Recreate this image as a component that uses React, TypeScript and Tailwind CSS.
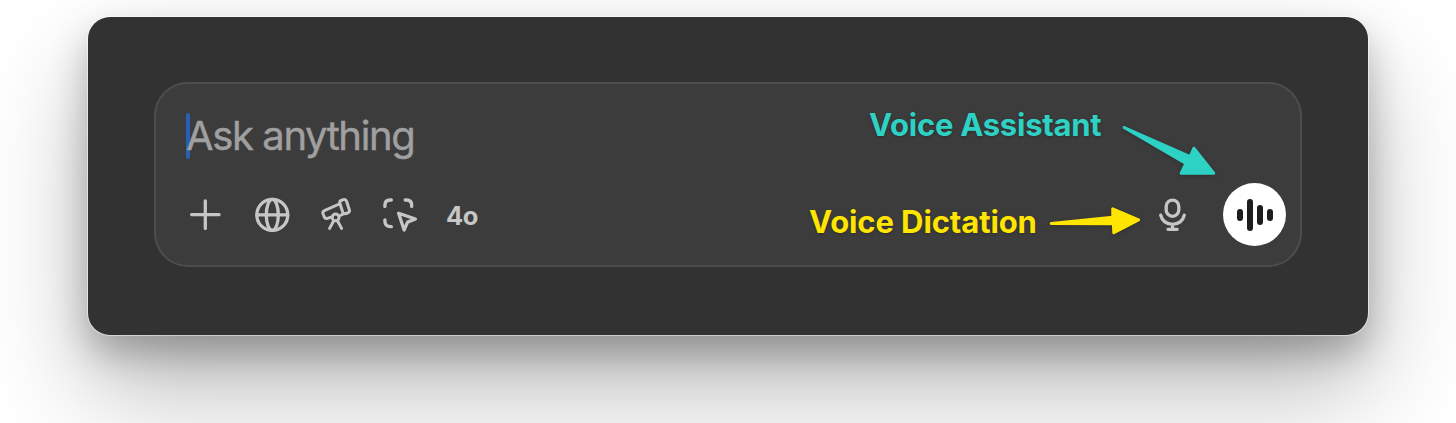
import type { ReactNode } from "react";

type IconProps = { viewBox: string; className: string; children: ReactNode };

function Glyph({ viewBox, className, children }: IconProps) {
  return (
    <svg viewBox={viewBox} className={`block shrink-0 ${className}`} fill="none" stroke="currentColor" strokeWidth="3.3" strokeLinecap="round" strokeLinejoin="round">
      {children}
    </svg>
  );
}

export default function App() {
  return (
    <main className="h-[423px] w-[1456px] overflow-hidden bg-white px-[88px] pt-[17px] font-['Inter','Liberation_Sans',sans-serif]">
      <section className="h-[318px] rounded-[22px] bg-[#323232] px-[66px] pt-[65px] shadow-[0_0_0_1px_rgba(255,255,255,0.5),0_18px_36px_rgba(0,0,0,0.25),0_54px_104px_rgba(0,0,0,0.28)]">
        <div className="relative flex h-[185px] flex-col rounded-[34px] border-2 border-[#4d4d4d] bg-[#3c3c3c] pt-[28px] pr-[14px] pl-[30px]">
          <div className="flex h-[47px] items-center">
            <span className="h-[46px] w-[4px] shrink-0 rounded-full bg-[#2860b4]" />
            <span className="-ml-[4px] text-[40px] leading-[47px] tracking-[-1.4px] whitespace-nowrap text-[#a0a0a0] [-webkit-text-stroke:0.4px_#a0a0a0]">Ask anything</span>
          </div>

          <div className="mt-[20px] flex h-[71px] items-center pl-[2px] text-[#c6c6c6]">
            <Glyph viewBox="188 197 36 36" className="h-[36px] w-[36px]">
              <path d="M205.3 200.8v27.6M191.6 214.6h27.5" />
            </Glyph>
            <Glyph viewBox="254 197 36 36" className="ml-[30px] h-[36px] w-[36px]">
              <circle cx="272.3" cy="214.9" r="15.5" />
              <ellipse cx="272.3" cy="214.9" rx="6" ry="15.5" />
              <path d="M257 214.9h30.6" />
            </Glyph>
            <Glyph viewBox="318 197 36 36" className="ml-[28px] h-[36px] w-[36px]">
              <g strokeWidth="3">
                <path d="M331 217.2l-3.500 1.200q-2.200.7-3.200-1.400l-1.300-3.200q-.8-2.200 1.400-3.200L339.300 204" />
                <rect x="341.1" y="199.6" width="7" height="14" rx="2.6" transform="rotate(-18 344.6 206.6)" />
                <path d="M339.2 216l4.2-2.1" />
                <circle cx="335.6" cy="217.4" r="3.4" />
                <path d="M333.5 221.2l-3.9 7.2M337.7 221.2l3.9 7.2" />
              </g>
            </Glyph>
            <Glyph viewBox="382 197 36 36" className="ml-[28px] h-[36px] w-[36px]">
              <path d="M384.9 206.4v-1.2q0-5.2 5.2-5.2h1.3M405.2 200h1.3q5.2 0 5.2 5.2v1.2M384.9 219.8v1.2q0 5.4 5.6 5.7h.9" />
              <path d="M398.6 213.2L415.4 219l-7.8 3.1-3.5 7.9z" />
            </Glyph>
            <span className="mt-[2px] ml-[28px] text-[25.5px] leading-[36px] font-bold tracking-[-0.6px]">4o</span>
            <div className="ml-auto flex items-center">
              <Glyph viewBox="1154 197 36 36" className="h-[36px] w-[36px]">
                <rect x="1165.2" y="200.1" width="12.6" height="16.2" rx="6.3" />
                <path d="M1159.7 215.2c1.2 5.6 6 9.2 11.8 9.2s10.6-3.6 11.8-9.2M1171.5 224.5v4.6M1167 229.3h9.2" />
              </Glyph>
              <button type="button" aria-label="Start voice mode" className="ml-[32px] flex h-[63px] w-[63px] items-center justify-center gap-[4px] rounded-full bg-white">
                <span className="h-[12px] w-[6px] rounded-full bg-[#1d1d1d]" />
                <span className="h-[32px] w-[6px] rounded-full bg-[#1d1d1d]" />
                <span className="h-[20px] w-[6px] rounded-full bg-[#1d1d1d]" />
                <span className="h-[12px] w-[6px] rounded-full bg-[#1d1d1d]" />
              </button>
            </div>
          </div>

          <span className="absolute top-[21px] left-[713px] text-[31px] leading-[40px] font-bold tracking-[-0.25px] whitespace-nowrap text-[#2ed2c5] [text-shadow:0_1px_3px_rgba(0,0,0,0.25)]">Voice Assistant</span>
          <span className="absolute top-[118px] left-[653px] text-[31px] leading-[40px] font-bold tracking-[-0.1px] whitespace-nowrap text-[#ffe500] [text-shadow:0_1px_3px_rgba(0,0,0,0.25)]">Voice Dictation</span>
          <svg viewBox="1116 116 110 70" className="absolute top-[32px] left-[960px] h-[70px] w-[110px] drop-shadow-[0_1px_2px_rgba(0,0,0,0.2)]" fill="#2ed2c5" stroke="#2ed2c5" strokeWidth="3" strokeLinejoin="round">
            <path d="M1124.2 127.5L1190.2 156.7L1193.9 148.2L1213.7 173.2L1181.2 173.2L1185.9 163.5Z" />
          </svg>
          <svg viewBox="1042 200 104 42" className="absolute top-[116px] left-[886px] h-[42px] w-[104px] drop-shadow-[0_1px_2px_rgba(0,0,0,0.2)]" fill="#ffe500" stroke="#ffe500" strokeWidth="3" strokeLinejoin="round">
            <path d="M1051.2 223.4L1112.8 217.2L1112.7 208.8L1138.5 219.8L1113.8 232.7L1113.4 223.8Z" />
          </svg>
        </div>
      </section>
    </main>
  );
}
